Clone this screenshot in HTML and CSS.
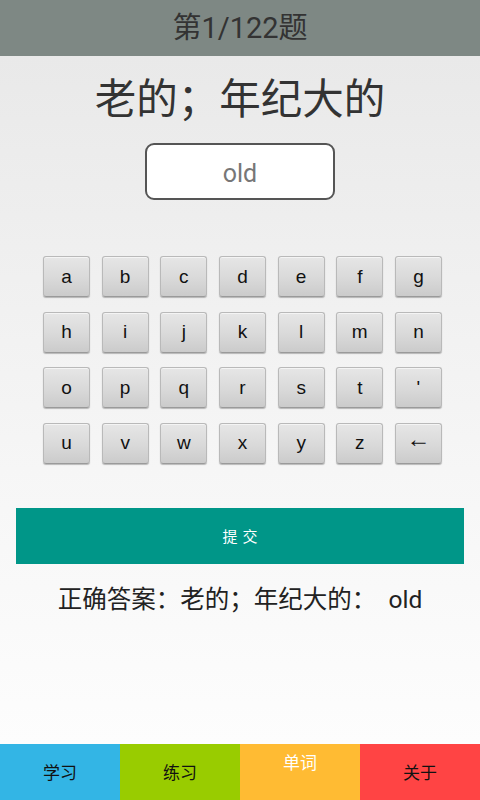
FILE: index.html
```html
<!DOCTYPE html>
<html lang="zh-CN">
<head>
<meta charset="utf-8">
<title>练习</title>
<link rel="stylesheet" href="styles.css">
</head>
<body>
<div class="app">
  <header class="topbar">第1/122题</header>
  <main class="content">
    <div class="word">老的；年纪大的</div>
    <div class="answer-box">old</div>
    <div class="keyboard">
      <button class="key">a</button>
      <button class="key">b</button>
      <button class="key">c</button>
      <button class="key">d</button>
      <button class="key">e</button>
      <button class="key">f</button>
      <button class="key">g</button>
      <button class="key">h</button>
      <button class="key">i</button>
      <button class="key">j</button>
      <button class="key">k</button>
      <button class="key">l</button>
      <button class="key">m</button>
      <button class="key">n</button>
      <button class="key">o</button>
      <button class="key">p</button>
      <button class="key">q</button>
      <button class="key">r</button>
      <button class="key">s</button>
      <button class="key">t</button>
      <button class="key">'</button>
      <button class="key">u</button>
      <button class="key">v</button>
      <button class="key">w</button>
      <button class="key">x</button>
      <button class="key">y</button>
      <button class="key">z</button>
      <button class="key key-back">←</button>
    </div>
    <button class="submit">提交</button>
    <div class="result">正确答案：老的；年纪大的：&nbsp; old</div>
  </main>
  <nav class="tabs">
    <div class="tab tab-study">学习</div>
    <div class="tab tab-practice">练习</div>
    <div class="tab tab-words">单词</div>
    <div class="tab tab-about">关于</div>
  </nav>
</div>
</body>
</html>
```

FILE: styles.css
```css
* { box-sizing: border-box; }
html, body { margin: 0; padding: 0; }
body {
  font-family: Roboto, "Noto Sans CJK SC", "Noto Sans", sans-serif;
  color: #333;
}
.app {
  width: 480px;
  height: 800px;
  display: flex;
  flex-direction: column;
  overflow: hidden;
}
.topbar {
  height: 56px;
  flex: none;
  background: #7e8884;
  color: #333;
  font-size: 29px;
  line-height: 56px;
  text-align: center;
}
.content {
  flex: 1;
  display: flex;
  flex-direction: column;
  align-items: center;
  background: linear-gradient(#e9e9e9, #f6f6f6 60%, #fdfdfd);
}
.word {
  margin-top: 19px;
  font-size: 41.5px;
  line-height: 50px;
  color: #333;
  text-align: center;
}
.answer-box {
  margin-top: 18px;
  width: 190px;
  height: 57px;
  background: #fff;
  border: 2px solid #555;
  border-radius: 9px;
  color: #777;
  font-size: 25px;
  line-height: 57px;
  text-align: center;
}
.keyboard {
  margin-top: 56px;
  align-self: flex-start;
  margin-left: 43px;
  display: grid;
  grid-template-columns: repeat(7, 47px);
  grid-auto-rows: 41px;
  column-gap: 11.67px;
  row-gap: 14.67px;
}
.key {
  margin: 0;
  padding: 0;
  border: 1px solid #b9b9b9;
  border-bottom-color: #9a9a9a;
  border-radius: 3px;
  background: linear-gradient(#e6e6e6, #d9d9d9 55%, #cbcbcb);
  box-shadow: inset 0 1px 0 #f4f4f4, 0 1px 1px rgba(0,0,0,0.25);
  font-family: "Liberation Sans", Arial, sans-serif;
  font-size: 19px;
  color: #111;
  line-height: 38px;
  text-align: center;
}
.key-back { font-size: 24px; line-height: 24px; padding-bottom: 9px; font-family: "Liberation Sans", sans-serif; }
.submit {
  margin-top: 44px;
  width: 448px;
  height: 56px;
  border: none;
  background: #009688;
  color: #fff;
  font-family: "Noto Sans CJK SC", sans-serif;
  font-size: 15px;
  letter-spacing: 5px;
  padding: 0 0 0 5px;
}
.result {
  margin-top: 21px;
  font-size: 24.5px;
  line-height: 30px;
  color: #222;
  text-align: center;
}
.tabs {
  height: 56px;
  flex: none;
  display: grid;
  grid-template-columns: repeat(4, 1fr);
}
.tab {
  font-family: "Noto Sans CJK SC", sans-serif;
  font-size: 17px;
  text-align: center;
  line-height: 56px;
  color: #111;
}
.tab-study { background: #33b5e5; }
.tab-practice { background: #99cc00; }
.tab-words { background: #ffbb33; color: #fff; line-height: 36px; }
.tab-about { background: #ff4444; }
```
